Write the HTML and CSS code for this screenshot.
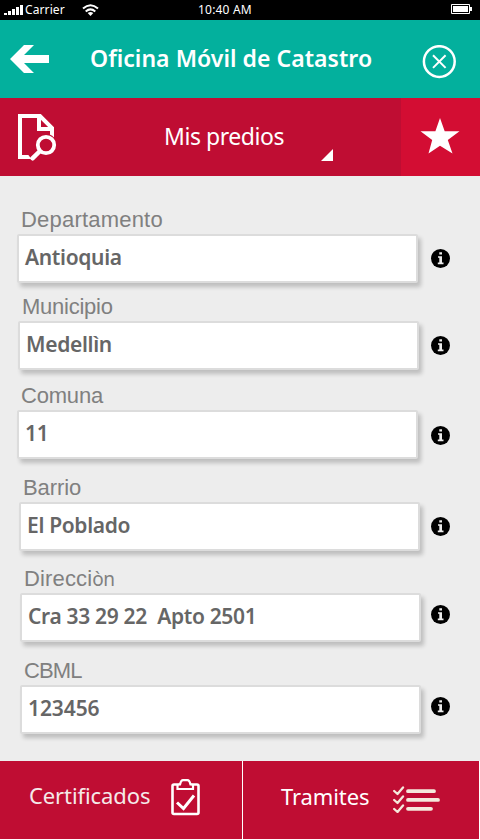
FILE: index.html
```html
<!DOCTYPE html>
<html lang="es">
<head>
<meta charset="utf-8">
<title>Oficina Móvil de Catastro</title>
<link rel="stylesheet" href="styles.css">
</head>
<body>
<svg width="0" height="0" class="defs"><defs>
  <symbol id="info" viewBox="0 0 19 19"><circle cx="9.5" cy="9.5" r="9.5"/><path fill="#ededed" d="M8.3 3.2h2.7v2.4H8.300zM7 7.200h4v6.300h1.500v1.700H6.800v-1.700h1.500V8.700H7z"/></symbol>
</defs></svg>
<div class="app">
  <div class="status">
    <svg class="signal" width="20" height="12" viewBox="0 0 20 12" fill="#fff"><path d="M0 10h3v2H0zM4 8h3v4H4zM8 6h3v6H8zM12 4h3v8h-3zM16 2h3v10h-3z"/></svg>
    <span class="carrier">Carrier</span>
    <svg class="wifi" width="17" height="12" viewBox="0 0 17 12" fill="none" stroke="#fff" stroke-width="2"><path d="M1 4.600Q8.500-2.200 16 4.600M3.700 7.500Q8.500 3.200 13.300 7.500"/><path fill="#fff" stroke="none" d="M5.700 9Q8.500 7 11.300 9L8.500 11.900z"/></svg>
    <span class="clock">10:40 AM</span>
    <svg class="battery" width="21" height="10" viewBox="0 0 21 10"><path fill="none" stroke="#fff" d="M.5.5h18v9H.5z"/><path fill="#fff" d="M2 2h15v6H2zM19 3h2v4h-2z"/></svg>
  </div>
  <header class="header">
    <svg class="back" width="39" height="28" viewBox="0 0 39 28"><path fill="#fff" d="M0 14 14 0h10L14 10h25v8H14l10 10H14z"/></svg>
    <h1 class="title">Oficina Móvil de Catastro</h1>
    <svg class="close" width="34" height="34" viewBox="0 0 34 34" fill="none" stroke="#fff"><circle cx="17.300" cy="16.600" r="15.400" stroke-width="2.500"/><path stroke-width="2" d="M11 10.300l12.600 12.600M23.600 10.300 11 22.900"/></svg>
  </header>
  <nav class="nav">
    <svg class="search" width="40" height="49" viewBox="0 0 40 49" fill="none" stroke="#fff"><path stroke-width="4" d="M16 44H3V3h20l12 12v10M22 3v13h13"/><circle cx="29" cy="32" r="11" fill="#bf0d33" stroke="none"/><circle cx="29" cy="32" r="8.200" stroke-width="3.800"/><path stroke="#bf0d33" stroke-width="7" d="M20 39l-6 6"/><path stroke-width="4.500" stroke-linecap="round" d="M22.500 38.500 15.500 45.300"/></svg>
    <span class="nav-title">Mis predios</span>
    <svg class="corner" width="12" height="12" viewBox="0 0 12 12"><path fill="#fff" d="M12 0v12H0z"/></svg>
    <div class="favorite"><svg width="40" height="37" viewBox="0 0 40 37"><path fill="#fff" d="M20 0l4.700 13.200H39.500L27.800 22 32.500 35.500 20 27.800 8.500 35.500 12.200 22 .500 13.200H15.400z"/></svg></div>
  </nav>
  <main class="form">
    <div class="field f1"><div class="label">Departamento</div><div class="row"><div class="box">Antioquia</div><svg class="info"><use href="#info"/></svg></div></div>
    <div class="field f2"><div class="label">Municipio</div><div class="row"><div class="box">Medellìn</div><svg class="info"><use href="#info"/></svg></div></div>
    <div class="field f3"><div class="label">Comuna</div><div class="row"><div class="box">11</div><svg class="info"><use href="#info"/></svg></div></div>
    <div class="field f4"><div class="label">Barrio</div><div class="row"><div class="box">El Poblado</div><svg class="info"><use href="#info"/></svg></div></div>
    <div class="field f5"><div class="label">Direcci<span class="label-end">òn</span></div><div class="row"><div class="box">Cra 33 29 22&nbsp; Apto 2501</div><svg class="info"><use href="#info"/></svg></div></div>
    <div class="field f6"><div class="label">CBML</div><div class="row"><div class="box">123456</div><svg class="info"><use href="#info"/></svg></div></div>
  </main>
  <footer class="footer">
    <div class="tab certs"><span>Certificados</span>
      <svg class="clip" width="29" height="37" viewBox="0 0 29 37" fill="none" stroke="#fff" stroke-width="2.600"><rect x="1.500" y="5.500" width="26" height="29.500" rx="1.500"/><path fill="#bf0d33" stroke-width="2.200" d="M6.500 10V6.500q0-1 2.500-1 1-4.300 3-4.300h4.500q2 0 3 4.300 2.500 0 2.500 1V10z"/><path stroke-width="3" d="M6 23.500l6.500 6L23 16.500"/></svg>
    </div>
    <div class="tab tasks"><span>Tramites</span>
      <svg class="list" width="47" height="27" viewBox="0 0 47 27" fill="none" stroke="#f5e9dc" stroke-linecap="round"><path stroke-width="2.300" stroke-linejoin="round" d="M1.200 5l3.300 3L10 1.500M1.200 14l3.300 3L10 10.500M1.200 23l3.300 3L10 19.500"/><path stroke-width="3.800" d="M15 5.200h26M15 13.900h30M15 22.800h23"/></svg>
    </div>
  </footer>
</div>
</body>
</html>
```

FILE: styles.css
```css
* { box-sizing: border-box; }
body { margin: 0; background: #fff; font-family: "Noto Sans", "Open Sans", sans-serif; }
.defs { display: block; }
.app { width: 480px; height: 840px; display: flex; flex-direction: column; overflow: hidden; white-space: nowrap; }
svg { flex: none; display: block; }
.status { height: 20px; flex: none; background: #000; color: #fff; display: flex; align-items: flex-start; font-size: 12px; line-height: 20px; padding-left: 4px; }
.signal { margin-top: 3px; }
.carrier { width: 57px; margin-left: 1px; letter-spacing: .1px; }
.wifi { margin-top: 4px; }
.clock { flex: 1; margin-left: 99px; letter-spacing: .2px; }
.battery { margin: 4px 8px 0 0; }
.header { height: 78px; flex: none; background: #03b09d; color: #fff; display: flex; padding-left: 10px; }
.back { margin-top: 25px; }
.title { margin: 0 0 0 41px; width: 333px; font-size: 23px; font-weight: 600; line-height: 76px; letter-spacing: .04px; }
.close { margin-top: 25px; margin-left: -1px; }
.nav { height: 78px; flex: none; background: #bf0d33; color: #fff; display: flex; padding-left: 17px; }
.search { margin-top: 15px; }
.nav-title { margin-left: 107px; width: 157px; font-size: 23px; line-height: 76px; letter-spacing: -.45px; }
.corner { margin-top: 51px; }
.favorite { width: 79px; margin-left: auto; background: #d30d33; display: flex; padding: 20px 0 0 19px; }
.form { height: 585px; flex: none; background: #ededed; padding-top: 30px; }
.field { height: 77px; }
.label { height: 28px; padding-left: 4px; font: 22px/28px "Liberation Sans", sans-serif; color: #808080; letter-spacing: -.1px; }
.label-end { font-family: "Noto Sans", sans-serif; font-size: 19px; letter-spacing: -.5px; }
.row { display: flex; }
.box { width: 401px; height: 49px; border: 2px solid #dcdcdc; border-radius: 2px; background: #fff; box-shadow: 3px 4px 4px rgba(0,0,0,.2); color: #666; font-size: 21px; font-weight: 600; line-height: 43px; padding-left: 6px; letter-spacing: -.33px; }
.info { width: 19px; height: 19px; margin: 15px 30px 0 auto; }
.f1 { margin-left: 17px; margin-bottom: 10px; }
.f2 { margin-left: 18px; margin-bottom: 12px; }
.f3 { margin-left: 17px; margin-bottom: 15px; }
.f4 { margin-left: 19px; margin-bottom: 14px; }
.f5 { margin-left: 20px; margin-bottom: 15px; }
.f6 { margin-left: 20px; }
.f1 .label { letter-spacing: .2px; }
.f2 .label { letter-spacing: -.25px; }
.f3 .label { letter-spacing: -.2px; }
.f5 .label { letter-spacing: .15px; }
.f6 .label { letter-spacing: -.9px; }
.f6 .box { letter-spacing: -.1px; }
.f3 .info { margin-top: 16px; }
.f5 .info, .f6 .info { margin-top: 12px; }
.footer { height: 78px; width: 479px; display: flex; background: #bf0d33; color: #fff; font-size: 22px; line-height: 70px; }
.tab { display: flex; }
.certs { width: 243px; border-right: 1px solid #fff; padding-left: 29px; color: #f5e9e9; line-height: 68px; letter-spacing: -.1px; }
.certs span { width: 142px; }
.clip { margin-top: 18px; }
.tasks { padding-left: 38px; letter-spacing: -.1px; }
.tasks span { width: 112px; }
.list { margin-top: 25px; }
```
